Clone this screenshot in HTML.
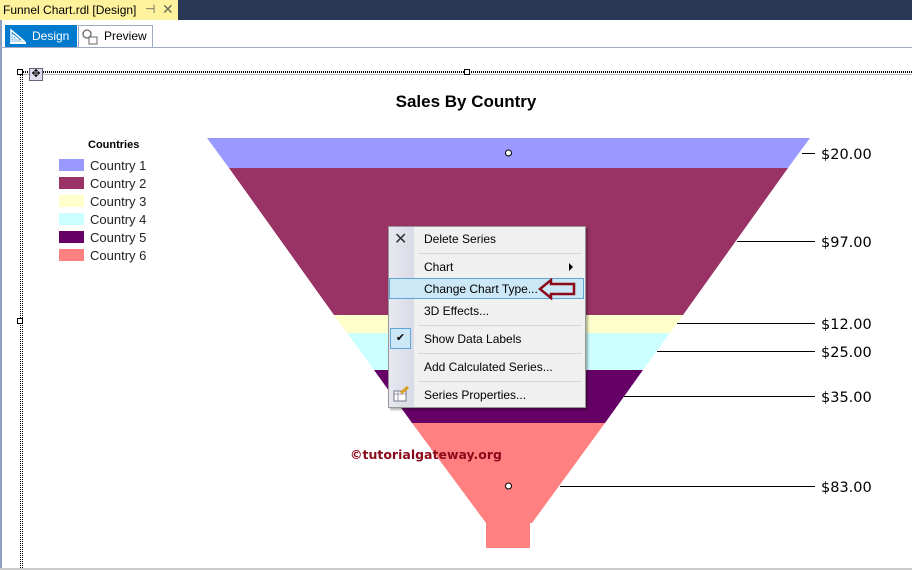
<!DOCTYPE html>
<html><head><meta charset="utf-8"><style>
*{margin:0;padding:0;box-sizing:border-box}
body{width:912px;height:570px;overflow:hidden;background:#fff;font-family:"Liberation Sans",sans-serif;position:relative}
.a{position:absolute}
.mi{position:absolute;left:424px;color:#000;font-family:"Liberation Sans",sans-serif;font-size:12px}
.sep{position:absolute;left:418px;width:164px;height:1px;background:#d7d7d7}
</style></head><body>
<div class="a" style="left:0;top:0;width:912px;height:20px;background:#293955"></div>
<div class="a" style="left:0;top:0;width:178px;height:20px;background:#fff29d"></div>
<div class="a" style="left:3px;top:3px;font-size:12px;color:#000">Funnel Chart.rdl [Design]</div>
<div class="a" style="left:145px;top:2px;font-size:12px;color:#555">⊣</div>
<div class="a" style="left:162px;top:1px;font-size:14px;color:#6a6a5a">✕</div>
<div class="a" style="left:0;top:20px;width:2px;height:550px;background:#8fa0c0"></div>
<div class="a" style="left:5px;top:25px;width:72px;height:23px;background:#007acc"></div>
<svg class="a" style="left:9px;top:28px" width="18" height="17"><path d="M2 2 L2 13 L15 13 L2 2 Z M4 7 L4 11 L9 11 Z" fill="none" stroke="#fff" stroke-width="1.5"/><path d="M1 15 H17" stroke="#fff" stroke-width="2"/></svg>
<div class="a" style="left:32px;top:29px;font-size:12px;color:#fff">Design</div>
<div class="a" style="left:78px;top:25px;width:75px;height:23px;border:1px solid #a0aac0;border-bottom:none;background:#fff"></div>
<svg class="a" style="left:81px;top:28px" width="17" height="17"><circle cx="6" cy="6" r="4" fill="none" stroke="#666" stroke-width="1.3"/><path d="M9 9 L13 13" stroke="#666" stroke-width="1.5"/><rect x="8" y="9" width="8" height="7" fill="#fff" stroke="#666"/></svg>
<div class="a" style="left:104px;top:29px;font-size:12px;color:#000">Preview</div>
<div class="a" style="left:0;top:47px;width:912px;height:1px;background:#a0aac0"></div>
<div class="a" style="left:20px;top:71px;width:892px;height:2px;border-top:1px dotted #000;border-bottom:1px dotted #000"></div>
<div class="a" style="left:20px;top:74px;width:892px;height:1px;background:#bbb"></div>
<div class="a" style="left:20px;top:72px;width:3px;height:498px;border-left:1px dotted #000;border-right:1px dotted #000"></div>
<div class="a" style="left:17px;top:69px;width:6px;height:6px;border:1px solid #000;background:#fff"></div>
<div class="a" style="left:464px;top:69px;width:6px;height:6px;border:1px solid #000;background:#fff"></div>
<div class="a" style="left:17px;top:318px;width:6px;height:6px;border:1px solid #000;background:#fff"></div>
<div class="a" style="left:29px;top:68px;width:14px;height:13px;border:1px solid #667;background:#dde;font-size:11px;line-height:11px;text-align:center">✥</div>
<div class="a" style="left:0;top:568px;width:912px;height:2px;background:#ccc"></div>
<div class="a" style="left:0;top:92px;width:932px;text-align:center;font-size:17px;font-weight:bold;color:#000">Sales By Country</div>
<div class="a" style="left:88px;top:139px;font-size:11px;font-weight:bold">Countries</div>
<div class="a" style="left:59px;top:157px;font-size:13px;line-height:18px;color:#222">
<div><span style="display:inline-block;width:25px;height:12px;background:#9999ff;vertical-align:-1px;margin-right:6px"></span>Country 1</div>
<div><span style="display:inline-block;width:25px;height:12px;background:#993366;vertical-align:-1px;margin-right:6px"></span>Country 2</div>
<div><span style="display:inline-block;width:25px;height:12px;background:#ffffcc;vertical-align:-1px;margin-right:6px"></span>Country 3</div>
<div><span style="display:inline-block;width:25px;height:12px;background:#ccffff;vertical-align:-1px;margin-right:6px"></span>Country 4</div>
<div><span style="display:inline-block;width:25px;height:12px;background:#660066;vertical-align:-1px;margin-right:6px"></span>Country 5</div>
<div><span style="display:inline-block;width:25px;height:12px;background:#ff8080;vertical-align:-1px;margin-right:6px"></span>Country 6</div>
</div>
<svg class="a" style="left:0;top:0" width="912" height="570">
<polygon points="207,138 810,138 788,168 229,168" fill="#9999ff"/>
<polygon points="229,168 788,168 683,315 334,315" fill="#993366"/>
<polygon points="334,315 683,315 670,333 347,333" fill="#ffffcc"/>
<polygon points="347,333 670,333 643,370 374,370" fill="#ccffff"/>
<polygon points="374,370 643,370 605,423 412,423" fill="#660066"/>
<polygon points="412,423 605,423 532,523 486,523" fill="#ff8080"/>
<rect x="486" y="522" width="44" height="26" fill="#ff8080"/>
<g stroke="#000" stroke-width="1">
<line x1="802" y1="153.5" x2="815" y2="153.5"/>
<line x1="737" y1="241.5" x2="815" y2="241.5"/>
<line x1="677" y1="323.5" x2="815" y2="323.5"/>
<line x1="657" y1="351.5" x2="815" y2="351.5"/>
<line x1="624" y1="396.5" x2="815" y2="396.5"/>
<line x1="560" y1="486.5" x2="815" y2="486.5"/>
</g>
<g font-family="DejaVu Sans, Liberation Sans, sans-serif" font-size="14.5" fill="#000">
<text x="821" y="159">$20.00</text><text x="821" y="247">$97.00</text><text x="821" y="329">$12.00</text>
<text x="821" y="357">$25.00</text><text x="821" y="402">$35.00</text><text x="821" y="492">$83.00</text>
</g>
<circle cx="508.5" cy="153" r="3" fill="#fff" stroke="#000"/>
<circle cx="508.5" cy="486" r="3" fill="#fff" stroke="#000"/>
<text x="350" y="459" font-family="DejaVu Sans, Liberation Sans, sans-serif" font-size="12.5" font-weight="bold" fill="#8b0a1a">©tutorialgateway.org</text>
</svg>
<div class="a" style="left:388px;top:226px;width:198px;height:182px;background:#f0f0f0;border:1px solid #979797;box-shadow:2px 2px 2px rgba(0,0,0,.3)"></div>
<div class="a" style="left:389px;top:227px;width:25px;height:180px;background:linear-gradient(90deg,#e8e8f0,#d8dbe6)"></div>
<div class="a" style="left:394px;top:229px;font-size:16px;color:#333">✕</div>
<div class="mi" style="top:232px">Delete Series</div>
<div class="sep" style="top:253px"></div>
<div class="mi" style="top:260px">Chart</div>
<div class="a" style="left:569px;top:263px;width:0;height:0;border-left:4px solid #000;border-top:4px solid transparent;border-bottom:4px solid transparent"></div>
<div class="a" style="left:389px;top:278px;width:195px;height:21px;background:#cce8f6;border:1px solid #5fa6d6"></div>
<div class="mi" style="top:282px">Change Chart Type...</div>
<svg class="a" style="left:538px;top:278px" width="40" height="22"><path d="M2 11 L13 2 L13 6 L36 6 L36 16 L13 16 L13 20 Z" fill="none" stroke="#8b0a1a" stroke-width="2.5"/></svg>
<div class="mi" style="top:304px">3D Effects...</div>
<div class="sep" style="top:325px"></div>
<div class="a" style="left:390px;top:328px;width:21px;height:21px;background:#cce8f6;border:1px solid #5fa6d6;font-size:11px;text-align:center;line-height:19px">✔</div>
<div class="mi" style="top:332px">Show Data Labels</div>
<div class="sep" style="top:353px"></div>
<div class="mi" style="top:360px">Add Calculated Series...</div>
<div class="sep" style="top:381px"></div>
<svg class="a" style="left:392px;top:386px" width="18" height="17"><rect x="2" y="5" width="12" height="10" fill="#fff" stroke="#778"/><path d="M2 8H14M6 5V15" stroke="#99a"/><path d="M9 7 L16 1" stroke="#d9a020" stroke-width="3"/></svg>
<div class="mi" style="top:388px">Series Properties...</div>
</body></html>
